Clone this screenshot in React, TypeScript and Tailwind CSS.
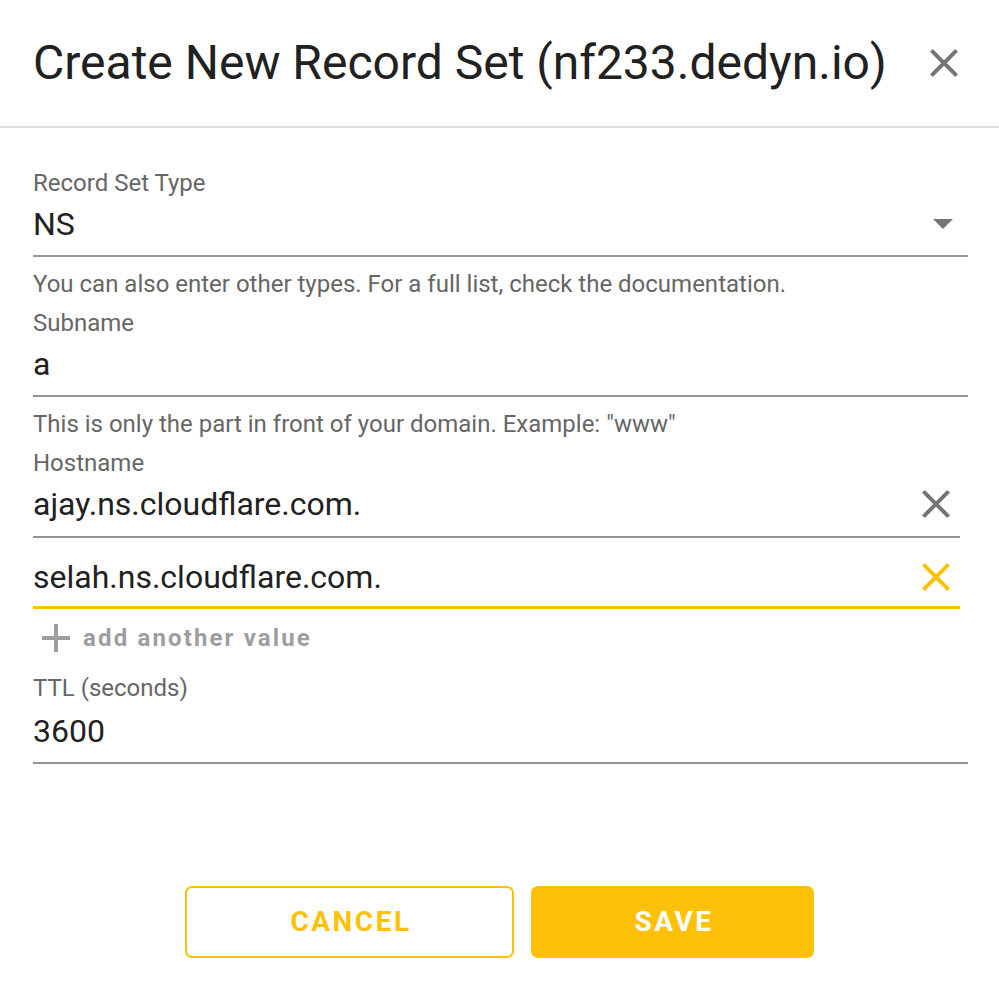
import React from "react";

const CloseIcon = ({ className }: { className?: string }) => (
  <svg viewBox="0 0 24 24" className={className} fill="currentColor">
    <path d="M19,6.41L17.59,5L12,10.59L6.41,5L5,6.41L10.59,12L5,17.59L6.41,19L12,13.41L17.59,19L19,17.59L13.41,12L19,6.41Z" />
  </svg>
);

const PlusIcon = ({ className }: { className?: string }) => (
  <svg viewBox="0 0 24 24" className={className} fill="currentColor">
    <path d="M19,13H13V19H11V13H5V11H11V5H13V11H19V13Z" />
  </svg>
);

const font = { fontFamily: "Roboto, 'Noto Sans', sans-serif" };

function Label({ children }: { children: React.ReactNode }) {
  return <div className="text-[24px] leading-[32px] text-[#666666]">{children}</div>;
}

function Helper({ children }: { children: React.ReactNode }) {
  return <div className="pt-[11px] text-[24px] leading-[32px] text-[#666666]">{children}</div>;
}

export default function App() {
  return (
    <div className="w-[999px] h-[987px] bg-white flex flex-col" style={font}>
      <div className="h-[126px] border-b-2 border-[#e0e0e0] flex items-center justify-between pl-[33px] pr-[31px] box-content">
        <div className="text-[48px] leading-[56px] text-[#212121]">
          Create New Record Set (nf233.dedyn.io)
        </div>
        <div className="w-[48px] h-[48px] flex items-center justify-center text-[#757575]">
          <CloseIcon className="w-[48px] h-[48px]" />
        </div>
      </div>

      <div className="flex flex-col pl-[33px] pr-[31px] pt-[39px]">
        {/* Record Set Type */}
        <Label>Record Set Type</Label>
        <div className="h-[50px] flex items-center justify-between">
          <span className="text-[32px] text-[#212121]">NS</span>
          <svg viewBox="0 0 20 10" className="w-[20px] h-[10px] mr-[15px] text-[#757575]" fill="currentColor">
            <path d="M0,0 L20,0 L10,10 Z" />
          </svg>
        </div>
        <div className="mt-[6px] h-[2px] bg-[#949494]" />
        <Helper>You can also enter other types. For a full list, check the documentation.</Helper>

        {/* Subname */}
        <div className="mt-[7px]">
          <Label>Subname</Label>
        </div>
        <div className="h-[50px] flex items-center">
          <span className="text-[32px] text-[#212121]">a</span>
        </div>
        <div className="mt-[6px] h-[2px] bg-[#949494]" />
        <Helper>This is only the part in front of your domain. Example: "www"</Helper>

        {/* Hostname */}
        <div className="mt-[7px]">
          <Label>Hostname</Label>
        </div>
        <div className="mr-[8px]">
          <div className="h-[50px] flex items-center justify-between">
            <span className="text-[32px] text-[#212121]">ajay.ns.cloudflare.com.</span>
            <CloseIcon className="w-[48px] h-[48px] text-[#757575]" />
          </div>
          <div className="mt-[7px] h-[2px] bg-[#949494]" />
          <div className="mt-[14px] h-[50px] flex items-center justify-between">
            <span className="text-[32px] text-[#212121]">selah.ns.cloudflare.com.</span>
            <CloseIcon className="w-[48px] h-[48px] text-[#FFC107]" />
          </div>
          <div className="mt-[4px] h-[3px] bg-[#FFC107]" />
        </div>
        <div className="mt-[13px] h-[32px] flex items-center pl-[9px]">
          <PlusIcon className="w-[48px] h-[48px] -ml-[10px] mr-[3px] text-[#9e9e9e]" />
          <span className="text-[24px] font-bold tracking-[2.14px] text-[#9e9e9e]">add another value</span>
        </div>

        {/* TTL */}
        <div className="mt-[18px]">
          <Label>TTL (seconds)</Label>
        </div>
        <div className="mt-[2px] h-[50px] flex items-center">
          <span className="text-[32px] text-[#212121]">3600</span>
        </div>
        <div className="mt-[6px] h-[2px] bg-[#949494]" />
      </div>

      <div className="flex-1" />
      <div className="flex justify-center gap-[17px] pb-[29px]">
        <button className="w-[329px] h-[72px] rounded-[7px] border-2 border-[#FFC107] text-[#FFC107] text-[28px] font-bold tracking-[2.5px] pl-[3px] flex items-center justify-center" style={font}>
          CANCEL
        </button>
        <button className="w-[283px] h-[72px] rounded-[7px] bg-[#FFC107] text-white text-[28px] font-bold tracking-[2.5px] pl-[3px] flex items-center justify-center" style={font}>
          SAVE
        </button>
      </div>
    </div>
  );
}
